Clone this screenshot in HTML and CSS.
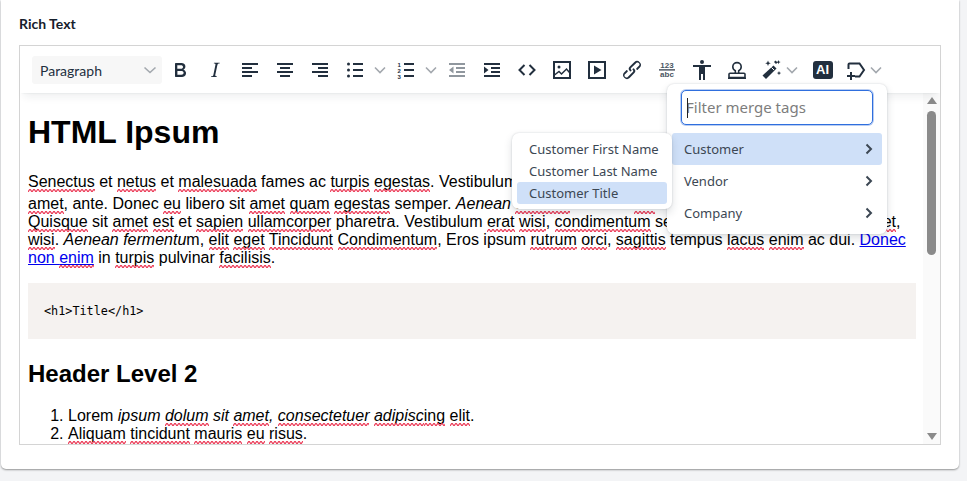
FILE: index.html
```html
<!DOCTYPE html>
<html lang="en">
<head>
    <meta charset="UTF-8">
    <meta name="viewport" content="width=device-width, initial-scale=1.0">
    <title>Rich Text</title>
    <link rel="stylesheet" href="styles.css">
</head>
<body>

<div class="card">
    <label class="field-label">Rich Text</label>

    <div class="editor">
        <!-- Toolbar -->
        <div class="toolbar">
            <div class="format-select">
                <span>Paragraph</span>
                <svg width="14" height="8" viewBox="0 0 14 8"><path class="chev" d="M1.5 1.5 7 6.5l5.5-5"/></svg>
            </div>

            <button class="tool"><svg width="24" height="24" viewBox="0 0 24 24"><path d="M7.8 19c-.3 0-.5 0-.6-.2l-.2-.5V5.7c0-.2 0-.4.2-.5l.6-.2h5c1.5 0 2.7.3 3.5 1 .7.6 1.1 1.4 1.1 2.5a3 3 0 0 1-.6 1.9c-.4.6-1 1-1.6 1.2.4.1.9.3 1.3.6s.8.7 1 1.2c.4.4.5 1 .5 1.6 0 1.3-.4 2.3-1.3 3-.8.7-2.1 1-3.8 1H7.8Zm5-8.3c.6 0 1.2-.1 1.6-.5.4-.3.6-.7.6-1.3 0-1.1-.8-1.7-2.3-1.7H9.3v3.5h3.4Zm.5 6c.7 0 1.3-.1 1.7-.4.4-.4.6-.9.6-1.5s-.2-1-.7-1.4c-.4-.3-1-.4-2-.4H9.4v3.8h4Z"/></svg></button>
            <button class="tool"><svg width="24" height="24" viewBox="0 0 24 24"><path d="m16.7 4.7-.1.9h-.3c-.6 0-1 0-1.4.3-.3.3-.4.6-.5 1.1l-2.1 9.8v.6c0 .5.4.8 1.4.8h.2l-.2.8H8l.2-.8h.2c1.100 0 1.800-.5 2-1.500l2-9.800.1-.5c0-.6-.4-.8-1.400-.8h-.3l.2-.9h5.800Z"/></svg></button>
            <button class="tool"><svg width="24" height="24" viewBox="0 0 24 24"><path d="M4 5h16v2H4zM4 9h10v2H4zM4 13h16v2H4zM4 17h10v2H4z"/></svg></button>
            <button class="tool"><svg width="24" height="24" viewBox="0 0 24 24"><path d="M4 5h16v2H4zM7 9h10v2H7zM4 13h16v2H4zM7 17h10v2H7z"/></svg></button>
            <button class="tool"><svg width="24" height="24" viewBox="0 0 24 24"><path d="M4 5h16v2H4zM10 9h10v2H10zM4 13h16v2H4zM10 17h10v2H10z"/></svg></button>

            <button class="tool"><svg width="24" height="24" viewBox="0 0 24 24"><circle cx="5.500" cy="6" r="1.500"/><circle cx="5.500" cy="12" r="1.500"/><circle cx="5.500" cy="18" r="1.500"/><path d="M10 5h10v2H10zM10 11h10v2H10zM10 17h10v2H10z"/></svg></button>
            <span class="caret-btn"><svg width="12" height="8" viewBox="0 0 12 8"><path class="chev" d="M1 1.500 6 6.500l5-5"/></svg></span>
            <button class="tool"><svg width="24" height="24" viewBox="0 0 24 24"><text class="tiny-num" x="3.500" y="8.500">1</text><text class="tiny-num" x="3.500" y="14.500">2</text><text class="tiny-num" x="3.500" y="20.500">3</text><path d="M10 5h10v2H10zM10 11h10v2H10zM10 17h10v2H10z"/></svg></button>
            <span class="caret-btn"><svg width="12" height="8" viewBox="0 0 12 8"><path class="chev" d="M1 1.500 6 6.500l5-5"/></svg></span>

            <button class="tool disabled"><svg width="24" height="24" viewBox="0 0 24 24"><path d="M4 5h16v2H4zM11 9h9v2h-9zM11 13h9v2h-9zM4 17h16v2H4zM8.500 8.500v7L4 12z"/></svg></button>
            <button class="tool"><svg width="24" height="24" viewBox="0 0 24 24"><path d="M4 5h16v2H4zM11 9h9v2h-9zM11 13h9v2h-9zM4 17h16v2H4zM4 8.500v7L8.500 12z"/></svg></button>
            <button class="tool"><svg width="24" height="24" viewBox="0 0 24 24"><path class="line" d="M9.500 7 4.500 12l5 5M14.500 7l5 5-5 5"/></svg></button>
            <button class="tool"><svg width="24" height="24" viewBox="0 0 24 24"><rect class="line" x="4" y="4" width="16" height="16"/><circle cx="9" cy="9" r="1.500"/><path class="line thin" d="m4.500 17 4.500-3.500 2.500 2.500 5-5 3 3.500"/></svg></button>
            <button class="tool"><svg width="24" height="24" viewBox="0 0 24 24"><rect class="line" x="4" y="4" width="16" height="16"/><path d="M9 7.500 16.500 12 9 16.500z"/></svg></button>
            <button class="tool"><svg width="24" height="24" viewBox="0 0 24 24"><path d="M6.200 12.300a1 1 0 0 1 1.400 1.400l-2 2a2 2 0 1 0 2.600 2.800l4.800-4.800a1 1 0 0 0 0-1.400 1 1 0 1 1 1.400-1.300 2.900 2.900 0 0 1 0 4L9.600 20a3.900 3.900 0 0 1-5.500-5.500l2-2Zm11.600-.6a1 1 0 0 1-1.400-1.400l2-2a2 2 0 1 0-2.600-2.800L11 10c-.4.4-.4 1 0 1.400a1 1 0 1 1-1.400 1.300 2.900 2.900 0 0 1 0-4L14.400 4a3.900 3.900 0 0 1 5.500 5.500l-2 2Z"/></svg></button>
            <button class="tool"><svg width="24" height="24" viewBox="0 0 24 24"><text class="count-num" x="12" y="10">123</text><path d="M4 11.300h16v1.200H4z"/><text class="count-num" x="12" y="19">abc</text></svg></button>
            <button class="tool"><svg width="24" height="24" viewBox="0 0 24 24"><path d="M12 2a2 2 0 1 1 0 4 2 2 0 0 1 0-4Zm9 7h-6v13h-2v-6h-2v6H9V9H3V7h18v2Z"/></svg></button>
            <button class="tool"><svg width="24" height="24" viewBox="0 0 24 24"><path class="line stamp" d="M10.300 15v-2.300C8.800 12 7.800 10.600 7.800 8.800a4.200 4.200 0 0 1 8.400 0c0 1.800-1 3.200-2.500 3.900V15M4 19.500v-3.200a1 1 0 0 1 1-1h14a1 1 0 0 1 1 1v3.200z"/><path d="M3 19.500h18V21H3z"/></svg></button>
            <button class="tool tool-wand"><svg width="24" height="24" viewBox="0 0 24 24"><path d="m14.500 7.500 3 3L7 21l-3.500-3.500z"/><path class="cut" d="m12.500 9.500 2.500 2.500"/><path d="m9 2.500.8 2 2 .8-2 .8-.8 2-.8-2-2-.8 2-.8zM19.500 2l.6 1.500 1.500.6-1.500.6-.6 1.500-.6-1.500-1.500-.6 1.500-.6zM20 13l.6 1.500 1.500.6-1.500.6-.6 1.500-.6-1.500-1.500-.6 1.500-.6zM16.500 2.500l2 2-1.500 1.500-2-2z"/></svg></button>
            <span class="caret-btn caret-tight"><svg width="12" height="8" viewBox="0 0 12 8"><path class="chev" d="M1 1.500 6 6.500l5-5"/></svg></span>
            <button class="tool tool-ai"><span class="ai-badge">AI</span></button>
            <button class="tool tool-tag"><svg width="24" height="24" viewBox="0 0 24 24"><path class="line" d="M4.500 11V6.500a1 1 0 0 1 1-1h10L20 12l-4.500 6.500H11"/><path d="M6 14h2v3h3v2H8v3H6v-3H3v-2h3z"/></svg></button>
            <span class="caret-btn caret-tight"><svg width="12" height="8" viewBox="0 0 12 8"><path class="chev" d="M1 1.500 6 6.500l5-5"/></svg></span>
        </div>

        <!-- Document area -->
        <div class="body-row">
            <div class="doc">
                <h1>HTML Ipsum</h1>
                <p><span class="sp">Senectus</span> et <span class="sp">netus</span> et <span class="sp">malesuada</span> fames ac <span class="sp">turpis</span> <span class="sp">egestas</span>. Vestibulum tortor quam, feugiat vitae, ultricies eget, tempor sit <span class="sp">amet</span>, ante. Donec <span class="sp">eu</span> libero sit <span class="sp">amet</span> <span class="sp">quam</span> <span class="sp">egestas</span> semper. <em>Aenean <span class="sp">ultricies</span> mi vitae <span class="sp">est</span>.</em> <span class="lift">Mauris</span> placerat eleifend leo. <span class="sp">Quisque</span> sit <span class="sp">amet</span> <span class="sp">est</span> et <span class="sp">sapien</span> <span class="sp">ullamcorper</span> pharetra. Vestibulum <span class="sp">erat</span> <span class="sp">wisi</span>, <span class="sp">condimentum</span> sed, commodo sit, ornare sit <span class="sp">amet</span>, <span class="sp">wisi</span>. <em>Aenean fermentu</em>m, <span class="sp">elit</span> <span class="sp">eget</span> <span class="sp">Tincidunt</span> <span class="sp">Condimentum</span>, Eros ipsum <span class="sp">rutrum</span> <span class="sp">orci</span>, <span class="sp">sagittis</span> tempus <span class="sp">lacus</span> <span class="sp">enim</span> ac dui. <a href="#">Donec non <span class="sp">enim</span></a> in <span class="sp">turpis</span> pulvinar <span class="sp">facilisis</span>.</p>
                <pre>&lt;h1&gt;Title&lt;/h1&gt;</pre>
                <h2>Header Level 2</h2>
                <ol>
                    <li>Lorem <em>ipsum <span class="sp">dolum</span> sit <span class="sp">amet</span>, <span class="sp">consectetuer</span> <span class="sp">adipisc</span></em><span class="sp">ing</span> <span class="sp">elit</span>.</li>
                    <li><span class="sp">Aliquam</span> <span class="sp">tincidunt</span> <span class="sp">mauris</span> <span class="sp">eu</span> <span class="sp">risus</span>.</li>
                </ol>
            </div>
            <div class="scrollbar">
                <span class="arrow-up"></span>
                <span class="thumb-track"><span class="thumb"></span></span>
                <span class="arrow-down"></span>
            </div>
        </div>

        <!-- Merge tag menus -->
        <div class="menu merge-menu">
            <div class="filter-box">
                <input type="text" class="filter-input" placeholder="Filter merge tags">
                <span class="text-caret"></span>
            </div>
            <div class="menu-item active">Customer <svg width="10" height="14" viewBox="0 0 10 14"><path class="arrow" d="m2.500 2.500 4.500 4.500-4.500 4.500"/></svg></div>
            <div class="menu-item">Vendor <svg width="10" height="14" viewBox="0 0 10 14"><path class="arrow" d="m2.500 2.500 4.500 4.500-4.500 4.500"/></svg></div>
            <div class="menu-item">Company <svg width="10" height="14" viewBox="0 0 10 14"><path class="arrow" d="m2.500 2.500 4.500 4.500-4.500 4.500"/></svg></div>
        </div>
        <div class="menu sub-menu">
            <div class="sub-item">Customer First Name</div>
            <div class="sub-item">Customer Last Name</div>
            <div class="sub-item active">Customer Title</div>
        </div>
    </div>
</div>

</body>
</html>
```

FILE: styles.css
```css
* {
    box-sizing: border-box;
}

html, body {
    height: 100%;
}

body {
    margin: 0;
    background: #f3f4f6;
    overflow: hidden;
    font-family: Lato, sans-serif;
}

.card {
    width: 958px;
    height: 469px;
    margin-left: 1px;
    padding: 16px 18px 0;
    background: #fff;
    border-radius: 0 0 5px 5px;
    box-shadow: 0 1px 2px rgba(0, 0, 0, 0.4);
}

.field-label {
    display: block;
    height: 29px;
    font-size: 14px;
    line-height: 16px;
    font-weight: bold;
    color: #16202c;
}

.editor {
    position: relative;
    height: 400px;
    border: 1px solid #d4d4d4;
    display: flex;
    flex-direction: column;
}

/* toolbar */
.toolbar {
    position: relative;
    z-index: 1;
    flex: none;
    height: 47px;
    padding: 10px 0 0 12px;
    display: flex;
    align-items: flex-start;
    background: #fff;
    box-shadow: 0 2px 2px -2px rgba(34, 47, 62, 0.1), 0 8px 8px -4px rgba(34, 47, 62, 0.07);
}

.format-select {
    width: 130px;
    height: 28px;
    padding: 0 5px 0 8px;
    display: flex;
    align-items: center;
    justify-content: space-between;
    background: #f7f7f7;
    border-radius: 3px;
    font-size: 14px;
    color: #222f3e;
}

.tool {
    width: 35px;
    height: 28px;
    padding: 0;
    border: none;
    background: none;
    display: flex;
    align-items: center;
    justify-content: center;
    flex: none;
    color: #222f3e;
}

.tool svg {
    fill: #222f3e;
}

.tool.disabled svg {
    fill: rgba(34, 47, 62, 0.5);
}

.caret-btn {
    width: 16px;
    height: 28px;
    flex: none;
    display: flex;
    align-items: center;
    justify-content: center;
}

.caret-tight {
    width: 10px;
}

.caret-tight svg {
    flex: none;
}

.tool-wand {
    width: 33px;
}

.tool-ai {
    margin-left: 8px;
}

.tool-tag {
    width: 31px;
}

.chev {
    fill: none;
    stroke: #a3a8ae;
    stroke-width: 1.6;
}

.line {
    fill: none;
    stroke: #222f3e;
    stroke-width: 2;
}

.line.thin {
    stroke-width: 1.5;
}

.line.stamp {
    stroke-width: 1.6;
}

.cut {
    fill: none;
    stroke: #fff;
    stroke-width: 1;
}

.tiny-num {
    font-family: "Liberation Sans", sans-serif;
    font-size: 6px;
    font-weight: bold;
    fill: #222f3e;
}

.count-num {
    font-family: "Liberation Sans", sans-serif;
    font-size: 8px;
    font-weight: bold;
    text-anchor: middle;
    fill: #4a5562;
}

.ai-badge {
    width: 20px;
    height: 18px;
    border-radius: 3px;
    background: #222f3e;
    color: #fff;
    font-family: "Liberation Sans", sans-serif;
    font-size: 13px;
    font-weight: bold;
    line-height: 18px;
    text-align: center;
}

/* document */
.body-row {
    flex: 1;
    min-height: 0;
    display: flex;
}

.doc {
    flex: 1;
    min-width: 0;
    height: 100%;
    overflow: hidden;
    padding: 0 7px 0 8px;
    font-family: "Liberation Sans", Arial, sans-serif;
    font-size: 16px;
    color: #000;
}

.doc h1 {
    margin: 21px 0 22px;
    font-size: 32px;
    line-height: 37px;
}

.doc p {
    margin: 0 0 16px;
}

.doc h2 {
    margin: 21px 0 20px;
    font-size: 24px;
    line-height: 27px;
}

.doc pre {
    height: 56px;
    margin: 0;
    padding: 21px 16px 0;
    background: #f5f2f0;
    font-family: "DejaVu Sans Mono", monospace;
    font-size: 11.800px;
    line-height: 14px;
}

.doc ol {
    margin: 0;
    padding-left: 40px;
}

.doc a {
    color: #0000ee;
}

/* spell check squiggle */
.sp {
    position: relative;
}

.sp::after {
    content: "";
    position: absolute;
    left: 0;
    right: 0;
    bottom: -2px;
    height: 3px;
    background: url("data:image/svg+xml,%3Csvg xmlns='http://www.w3.org/2000/svg' width='4' height='3'%3E%3Cpath d='M0 2.500C1 2.500 1 .5 2 .5S3 2.500 4 2.500' fill='none' stroke='%23ea2f4d' stroke-width='1.200'/%3E%3C/svg%3E") repeat-x;
}

.lift {
    vertical-align: 4px;
}

.scrollbar {
    width: 17px;
    flex: none;
    padding: 4px 0 4px;
    display: flex;
    flex-direction: column;
    align-items: center;
    background: #fafafa;
}

.arrow-up {
    width: 0;
    height: 0;
    border: 5px solid transparent;
    border-top: none;
    border-bottom: 7px solid #8a8a8a;
}

.arrow-down {
    width: 0;
    height: 0;
    border: 5px solid transparent;
    border-bottom: none;
    border-top: 7px solid #8a8a8a;
}

.thumb-track {
    flex: 1;
    padding-top: 7px;
}

.thumb {
    display: block;
    width: 9px;
    height: 144px;
    background: #8a8a8a;
    border-radius: 5px;
}

/* merge tag menus */
.menu {
    position: absolute;
    z-index: 2;
    background: #fff;
    border-radius: 7px;
    box-shadow: 0 0 2px rgba(34, 47, 62, 0.2), 0 4px 8px rgba(34, 47, 62, 0.15);
    font-family: "Noto Sans", sans-serif;
    font-size: 13px;
    color: #3c4753;
}

.merge-menu {
    left: 647px;
    top: 38px;
    width: 220px;
    height: 150px;
    padding: 6px 5px;
}

.filter-box {
    position: relative;
    height: 35px;
    margin: 0 9px 8px;
}

.filter-input {
    width: 100%;
    height: 100%;
    padding: 0 4px 2px;
    border: 1px solid #2f6fde;
    border-radius: 5px;
    box-shadow: 0 0 0 1px #b9cdf2;
    outline: none;
    font-family: "Noto Sans", sans-serif;
    font-size: 15px;
    color: #222f3e;
}

.filter-input::placeholder {
    color: #7d7d7d;
}

.text-caret {
    position: absolute;
    left: 6px;
    top: 8px;
    width: 1px;
    height: 20px;
    background: #222;
}

.menu-item {
    height: 32px;
    padding: 0 8px 0 12px;
    display: flex;
    align-items: center;
    justify-content: space-between;
    border-radius: 3px;
}

.menu-item.active, .sub-item.active {
    background: #cfe0f8;
}

.arrow {
    fill: none;
    stroke: #3c4753;
    stroke-width: 2;
}

.sub-menu {
    left: 492px;
    top: 87px;
    width: 160px;
    height: 76px;
    padding: 5px;
}

.sub-item {
    height: 22px;
    padding-left: 12px;
    line-height: 22px;
    border-radius: 3px;
}
```
